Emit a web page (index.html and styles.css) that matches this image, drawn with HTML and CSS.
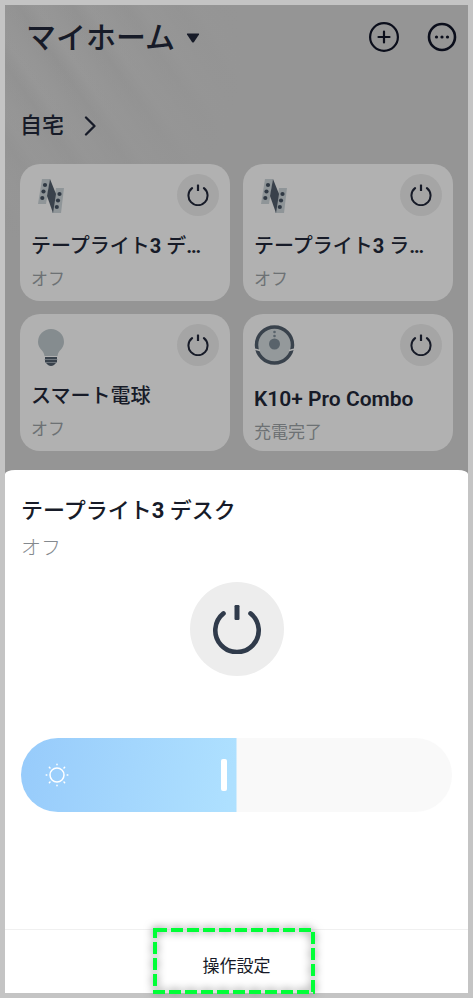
FILE: index.html
```html
<!DOCTYPE html>
<html lang="ja">
<head>
<meta charset="utf-8">
<meta name="viewport" content="width=device-width, initial-scale=1">
<title>マイホーム</title>
<link rel="stylesheet" href="styles.css">
</head>
<body>
<svg class="defs" aria-hidden="true">
  <symbol id="power" viewBox="0 0 50 50">
    <path d="M11.5 9.4A21.7 21.7 0 1 0 38.5 9.4" fill="none" stroke="currentColor" stroke-width="4.6" stroke-linecap="round"/>
    <rect x="22.5" y="1" width="5" height="15" rx="1.2" fill="currentColor"/>
  </symbol>
  <symbol id="strip" viewBox="0 0 26 36">
    <path d="M4 1h8l-4 25H0z" fill="#8f9598"/>
    <path d="M18 10h8l-3 25h-9z" fill="#8f9598"/>
    <path d="M12 1l6 15-3 19-6-17z" fill="#39414b"/>
    <g fill="#303944">
      <circle cx="7" cy="7" r="2.1"/><circle cx="5.500" cy="13.500" r="2.1"/><circle cx="4.300" cy="20" r="2.1"/>
      <circle cx="21.500" cy="16" r="2.1"/><circle cx="20" cy="22.500" r="2.1"/><circle cx="18.800" cy="29" r="2.1"/>
    </g>
  </symbol>
</svg>
<main class="screen">
  <section class="home">
    <header class="top">
      <button class="home-name">マイホーム
        <svg width="14" height="10" viewBox="0 0 14 10"><path d="M1.500 .5h11q1 0 .5 1L8 9q-1 1-2 0L1 1.500Q.5.5 1.500.5z" fill="currentColor"/></svg>
      </button>
      <div class="actions">
        <button class="icon-button" aria-label="追加">
          <svg width="30" height="30" viewBox="0 0 30 30" fill="none" stroke="currentColor" stroke-width="2.200" stroke-linecap="round"><circle cx="15" cy="15" r="13.900"/><path d="M15 9.500v11M9.500 15h11"/></svg>
        </button>
        <button class="icon-button" aria-label="メニュー">
          <svg width="30" height="30" viewBox="0 0 30 30"><circle cx="15" cy="15" r="13" fill="none" stroke="currentColor" stroke-width="2.600"/><g fill="currentColor"><circle cx="9.500" cy="15" r="1.600"/><circle cx="15" cy="15" r="1.600"/><circle cx="20.500" cy="15" r="1.600"/></g></svg>
        </button>
      </div>
    </header>
    <button class="room">自宅
      <svg width="12" height="20" viewBox="0 0 12 20"><path d="M2 1.500l8.500 8.500L2 18.500" fill="none" stroke="currentColor" stroke-width="2.300" stroke-linecap="round" stroke-linejoin="round"/></svg>
    </button>
    <div class="cards">
      <article class="card">
        <div class="card-head">
          <svg class="device" viewBox="-7 -4 42 42"><use href="#strip" width="26" height="36"/></svg>
          <button class="power" aria-label="電源"><svg><use href="#power"/></svg></button>
        </div>
        <h2>テープライト<b>3</b> デ<b>…</b></h2>
        <p>オフ</p>
      </article>
      <article class="card">
        <div class="card-head">
          <svg class="device" viewBox="-7 -4 42 42"><use href="#strip" width="26" height="36"/></svg>
          <button class="power" aria-label="電源"><svg><use href="#power"/></svg></button>
        </div>
        <h2>テープライト<b>3</b> ラ<b>…</b></h2>
        <p>オフ</p>
      </article>
      <article class="card">
        <div class="card-head">
          <svg class="device" viewBox="0 0 42 42">
            <path d="M20 5a13 13 0 0 1 13 13c0 7-6 8-6.500 14h-13C13 26 7 25 7 18A13 13 0 0 1 20 5z" fill="#858c8f"/>
            <path d="M14 33h12v5l-3 3q-3 2-6 0l-3-3z" fill="#39424c"/>
            <path d="M13.500 35.500h13M14 38.500h12" stroke="#7d848a" stroke-width=".8"/>
          </svg>
          <button class="power" aria-label="電源"><svg><use href="#power"/></svg></button>
        </div>
        <h2>スマート電球</h2>
        <p>オフ</p>
      </article>
      <article class="card">
        <div class="card-head">
          <svg class="device" viewBox="0 0 42 42">
            <circle cx="20.500" cy="21" r="18" fill="#94999b" stroke="#39424c" stroke-width="3.500"/>
            <path d="M0 25l6 1.500M41 25l-6 1.500" stroke="#b1b1b1" stroke-width="1.400"/>
            <circle cx="20.500" cy="20" r="5.500" fill="#59636b"/>
            <circle cx="20.500" cy="8" r="1.300" fill="#59636b"/><circle cx="20.500" cy="12" r="1.300" fill="#59636b"/>
          </svg>
          <button class="power" aria-label="電源"><svg><use href="#power"/></svg></button>
        </div>
        <h2 class="latin">K10+ Pro Combo</h2>
        <p>充電完了</p>
      </article>
    </div>
  </section>
  <section class="sheet">
    <div class="sheet-body">
      <h1>テープライト<b>3</b> デスク</h1>
      <p>オフ</p>
      <button class="power power-large" aria-label="電源"><svg><use href="#power"/></svg></button>
      <div class="brightness">
        <input type="range" min="0" max="100" value="47" aria-label="明るさ">
        <svg class="sun" width="24" height="24" viewBox="0 0 24 24" fill="none" stroke="#fff" stroke-linecap="round"><circle cx="12" cy="12" r="7" stroke-width="1.500"/><path d="M12 1.200v.6M12 22.200v.6M1.200 12h.6M22.200 12h.6M4.400 4.400l.6.6M19 19l.6.6M4.400 19.600l.6-.6M19 5l.6-.6" stroke-width="1.500"/></svg>
      </div>
    </div>
    <footer>
      <button class="settings">操作設定
        <svg class="highlight" width="162" height="66" viewBox="0 0 162 66" fill="none" stroke="#00ff37" stroke-width="4" aria-hidden="true">
          <path d="M0 2h14M18 2h144" stroke-dasharray="12 4"/>
          <path d="M10 2h4"/>
          <path d="M160 4v62" stroke-dasharray="12 4"/>
          <path d="M2 0v66" stroke-dasharray="12 4" stroke-dashoffset="2"/>
          <path d="M0 64h162" stroke-dasharray="12 4"/>
        </svg>
      </button>
    </footer>
  </section>
</main>
</body>
</html>
```
FILE: styles.css
```css
* { box-sizing: border-box; }

body {
  margin: 0;
  font-family: Roboto, "Noto Sans CJK JP", sans-serif;
  color: #171b28;
}

h1, h2, p { margin: 0; }

b { font-weight: 700; }

button {
  padding: 0;
  border: 0;
  background: none;
  color: inherit;
  font: inherit;
}

svg { display: block; flex: none; }

.defs { position: absolute; width: 0; height: 0; }

.screen {
  display: flex;
  flex-direction: column;
  min-height: 100vh;
  border: 5px solid #c4c4c4;
  background:
    radial-gradient(ellipse at 20% 20%, transparent, #959595 70%) 0 0 / 240px 240px no-repeat,
    repeating-linear-gradient(55deg, #959595 0, #919191 16px, #979797 30px, #959595 44px) 0 0 / 240px 240px no-repeat,
    #959595;
}

.home { padding: 12px 15px 19px; }

.top {
  display: flex;
  justify-content: space-between;
  align-items: center;
  height: 40px;
  padding-left: 6px;
}

.home-name {
  display: flex;
  align-items: center;
  gap: 11px;
  padding-top: 2px;
  font-size: 30px;
  font-weight: 500;
  line-height: 42px;
}

.actions { display: flex; gap: 28px; margin-right: -4px; }

.icon-button { color: #0b0e1b; }

.room {
  display: flex;
  align-items: center;
  gap: 20px;
  margin: 53px 0 22px;
  font-size: 22px;
  font-weight: 500;
  line-height: 32px;
}

.cards {
  display: grid;
  grid-template-columns: 1fr 1fr;
  gap: 13px;
}

.card {
  height: 137px;
  padding: 10px 11px;
  border-radius: 20px;
  background: #b1b1b1;
}

.card-head { display: flex; justify-content: space-between; }

.device { width: 42px; height: 42px; }

.power {
  display: grid;
  place-items: center;
  width: 42px;
  height: 42px;
  border-radius: 50%;
  background: #a5a5a5;
}

.power svg { width: 22px; height: 22px; }

.card h2 {
  margin-top: 15px;
  font-size: 20px;
  font-weight: 500;
  line-height: 30px;
  white-space: nowrap;
}

.card h2.latin { margin-top: 18px; font-size: 21px; font-weight: 600; }

.card p {
  margin-top: 5px;
  color: #6d7174;
  font-size: 17px;
  font-weight: 400;
  line-height: 26px;
}

.sheet {
  display: flex;
  flex: 1;
  flex-direction: column;
  border-radius: 10px 10px 0 0 / 4px 4px 0 0;
  background: #fff;
}

.sheet-body { flex: 1; padding: 25px 16px; }

.sheet h1 {
  font-size: 22px;
  font-weight: 500;
  line-height: 32px;
}

.sheet p {
  margin-top: 6px;
  color: #84898e;
  font-size: 20px;
  font-weight: 300;
  line-height: 30px;
}

.power-large {
  width: 94px;
  height: 94px;
  margin: 19px auto 62px;
  background: #ededed;
  color: #303b4b;
}

.power-large svg { width: 50px; height: 50px; }

.brightness { position: relative; }

.brightness input {
  display: block;
  width: 100%;
  height: 74px;
  margin: 0;
  border-radius: 37px;
  appearance: none;
  background:
    linear-gradient(100deg, #97cbfb, #afe1ff) 0 0 / 50% 100% no-repeat,
    #f9f9f9;
}

.brightness input::-webkit-slider-thumb {
  width: 6px;
  height: 32px;
  border-radius: 2px;
  appearance: none;
  background: #fff;
}

.sun {
  position: absolute;
  top: 25px;
  left: 24px;
  pointer-events: none;
}

footer {
  display: flex;
  justify-content: center;
  height: 64px;
  border-top: 1px solid #f0f0f0;
}

.settings {
  position: relative;
  width: 162px;
  padding-top: 8px;
  font-size: 17px;
  line-height: 26px;
}

.highlight {
  position: absolute;
  bottom: -1px;
  left: -3px;
  overflow: visible;
  filter: drop-shadow(0 0 4px #777);
}
```
